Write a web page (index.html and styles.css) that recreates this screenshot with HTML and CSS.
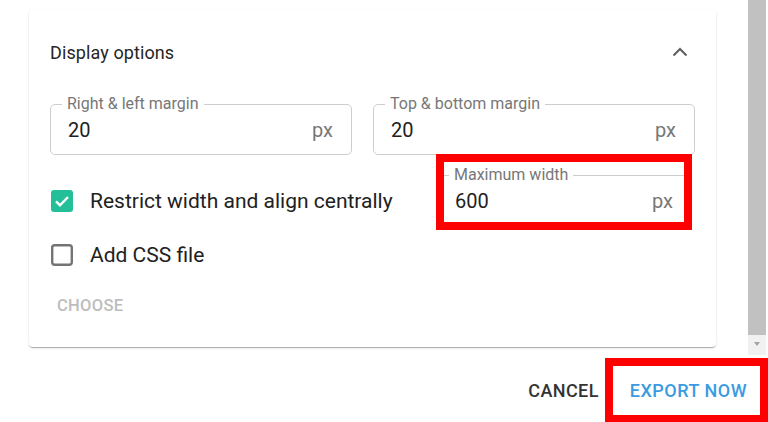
FILE: index.html
```html
<!DOCTYPE html>
<html>
<head>
<meta charset="utf-8">
<link rel="stylesheet" href="styles.css">
</head>
<body>
<div class="scroll-area">
  <div class="scroll-content">
    <div class="card">
      <div class="card-header">
        <span class="title">Display options</span>
        <svg class="chevron" width="16" height="10" viewBox="0 0 16 10"><polyline points="1.5,8.5 8,2 14.5,8.5" fill="none" stroke="#5f5f5f" stroke-width="2"/></svg>
      </div>
      <div class="fields-row">
        <fieldset class="field field-a">
          <legend>Right &amp; left margin</legend>
          <div class="field-body"><span class="value">20</span><span class="unit">px</span></div>
        </fieldset>
        <fieldset class="field">
          <legend>Top &amp; bottom margin</legend>
          <div class="field-body"><span class="value">20</span><span class="unit">px</span></div>
        </fieldset>
      </div>
      <div class="options-row">
        <div class="checks">
          <label class="check">
            <svg class="box" width="22" height="22" viewBox="0 0 22 22"><rect x="0" y="0" width="22" height="22" rx="3" fill="#22bf98"/><path d="M5 11.3l4 4 8-8.3" fill="none" stroke="#fff" stroke-width="2.4"/></svg>
            <span>Restrict width and align centrally</span>
          </label>
          <label class="check">
            <svg class="box" width="22" height="22" viewBox="0 0 22 22"><rect x="1.2" y="1.2" width="19.6" height="19.6" rx="2.5" fill="none" stroke="#747474" stroke-width="2.4"/></svg>
            <span>Add CSS file</span>
          </label>
          <div class="choose">CHOOSE</div>
        </div>
        <div class="field-wrap">
          <fieldset class="field field-max">
            <legend>Maximum width</legend>
            <div class="field-body"><span class="value">600</span><span class="unit">px</span></div>
          </fieldset>
          <div class="highlight hl-max"></div>
        </div>
      </div>
    </div>
  </div>
  <div class="scrollbar">
    <div class="thumb"></div>
    <div class="arrow"></div>
  </div>
</div>
<div class="footer">
  <button class="btn cancel">CANCEL</button>
  <button class="btn export">EXPORT NOW<span class="highlight hl-export"></span></button>
</div>
</body>
</html>
```
FILE: styles.css
```css
html, body {
  margin: 0;
  padding: 0;
  background: #fff;
  font-family: Roboto, "Liberation Sans", sans-serif;
  color: #212121;
  overflow: hidden;
}
.scroll-area {
  display: flex;
  height: 355px;
  width: 768px;
}
.scroll-content {
  width: 748px;
  padding: 10px 0 0 29px;
  box-sizing: border-box;
}
.card {
  width: 687px;
  box-sizing: border-box;
  padding: 0 21px 23px 21px;
  border-radius: 4px;
  background: #fff;
  box-shadow: 0 2px 1px -1px rgba(0,0,0,0.18), 0 1px 1px 0 rgba(0,0,0,0.12), 0 1px 3px 0 rgba(0,0,0,0.1);
}
.card-header {
  height: 42px;
  padding-top: 21px;
  margin-bottom: 22px;
  display: flex;
  align-items: center;
  justify-content: space-between;
}
.title {
  font-size: 18px;
  font-weight: 400;
  color: #262626;
  letter-spacing: 0.1px;
}
.chevron {
  margin-right: 7px;
}
.fields-row {
  display: grid;
  grid-template-columns: 302px 1fr;
  column-gap: 21px;
}
.field {
  margin: 0;
  border: 1px solid #cdcdcd;
  border-radius: 5px;
  padding: 0 18px 8px 17px;
  min-width: 0;
}
.field legend {
  font-size: 16px;
  line-height: 18px;
  color: #777;
  padding: 0 5px;
  margin-left: -6px;
}
.field-body {
  height: 33px;
  display: flex;
  align-items: center;
  justify-content: space-between;
  font-size: 20px;
}
.value {
  color: #212121;
}
.unit {
  color: #777;
}
.options-row {
  display: flex;
  margin-top: 11px;
  align-items: flex-start;
}
.checks {
  flex: 1;
  padding-top: 11px;
  display: flex;
  flex-direction: column;
  gap: 6px;
}
.check {
  height: 48px;
  display: flex;
  align-items: center;
  gap: 17px;
  padding-left: 1px;
  font-size: 21px;
  color: #212121;
}
.choose {
  margin-top: 3px;
  height: 36px;
  line-height: 36px;
  padding-left: 7px;
  font-size: 16.5px;
  font-weight: 500;
  color: #bdbdbd;
  letter-spacing: 0.3px;
}
.field-wrap {
  position: relative;
  width: 255px;
  margin-right: 3px;
}
.highlight {
  position: absolute;
  border: 8px solid #ff0000;
  box-sizing: border-box;
  pointer-events: none;
}
.hl-max {
  left: -1px;
  right: 0;
  top: -12px;
  bottom: -4px;
}
.scrollbar {
  width: 18px;
  background: #f1f1f1;
  display: flex;
  flex-direction: column;
}
.thumb {
  height: 335px;
  background: #c1c1c1;
}
.arrow {
  flex: 1;
  display: flex;
  justify-content: center;
  align-items: center;
}
.arrow::before {
  content: "";
  border-left: 3.5px solid transparent;
  border-right: 3.5px solid transparent;
  border-top: 4px solid #a3a3a3;
  margin-top: -2px;
}
.footer {
  height: 67px;
  display: flex;
  justify-content: flex-end;
  align-items: center;
  padding-right: 11px;
  gap: 11px;
}
.btn {
  position: relative;
  background: none;
  border: none;
  font-family: Roboto, "Liberation Sans", sans-serif;
  font-size: 18px;
  font-weight: 500;
  letter-spacing: 0.5px;
  padding: 8px 10px;
  margin-top: 3px;
}
.cancel {
  color: #333;
  letter-spacing: 0.4px;
}
.export {
  color: #3a9be3;
}
.hl-export {
  left: -15px;
  right: -11px;
  top: -14px;
  bottom: -14px;
}
```
